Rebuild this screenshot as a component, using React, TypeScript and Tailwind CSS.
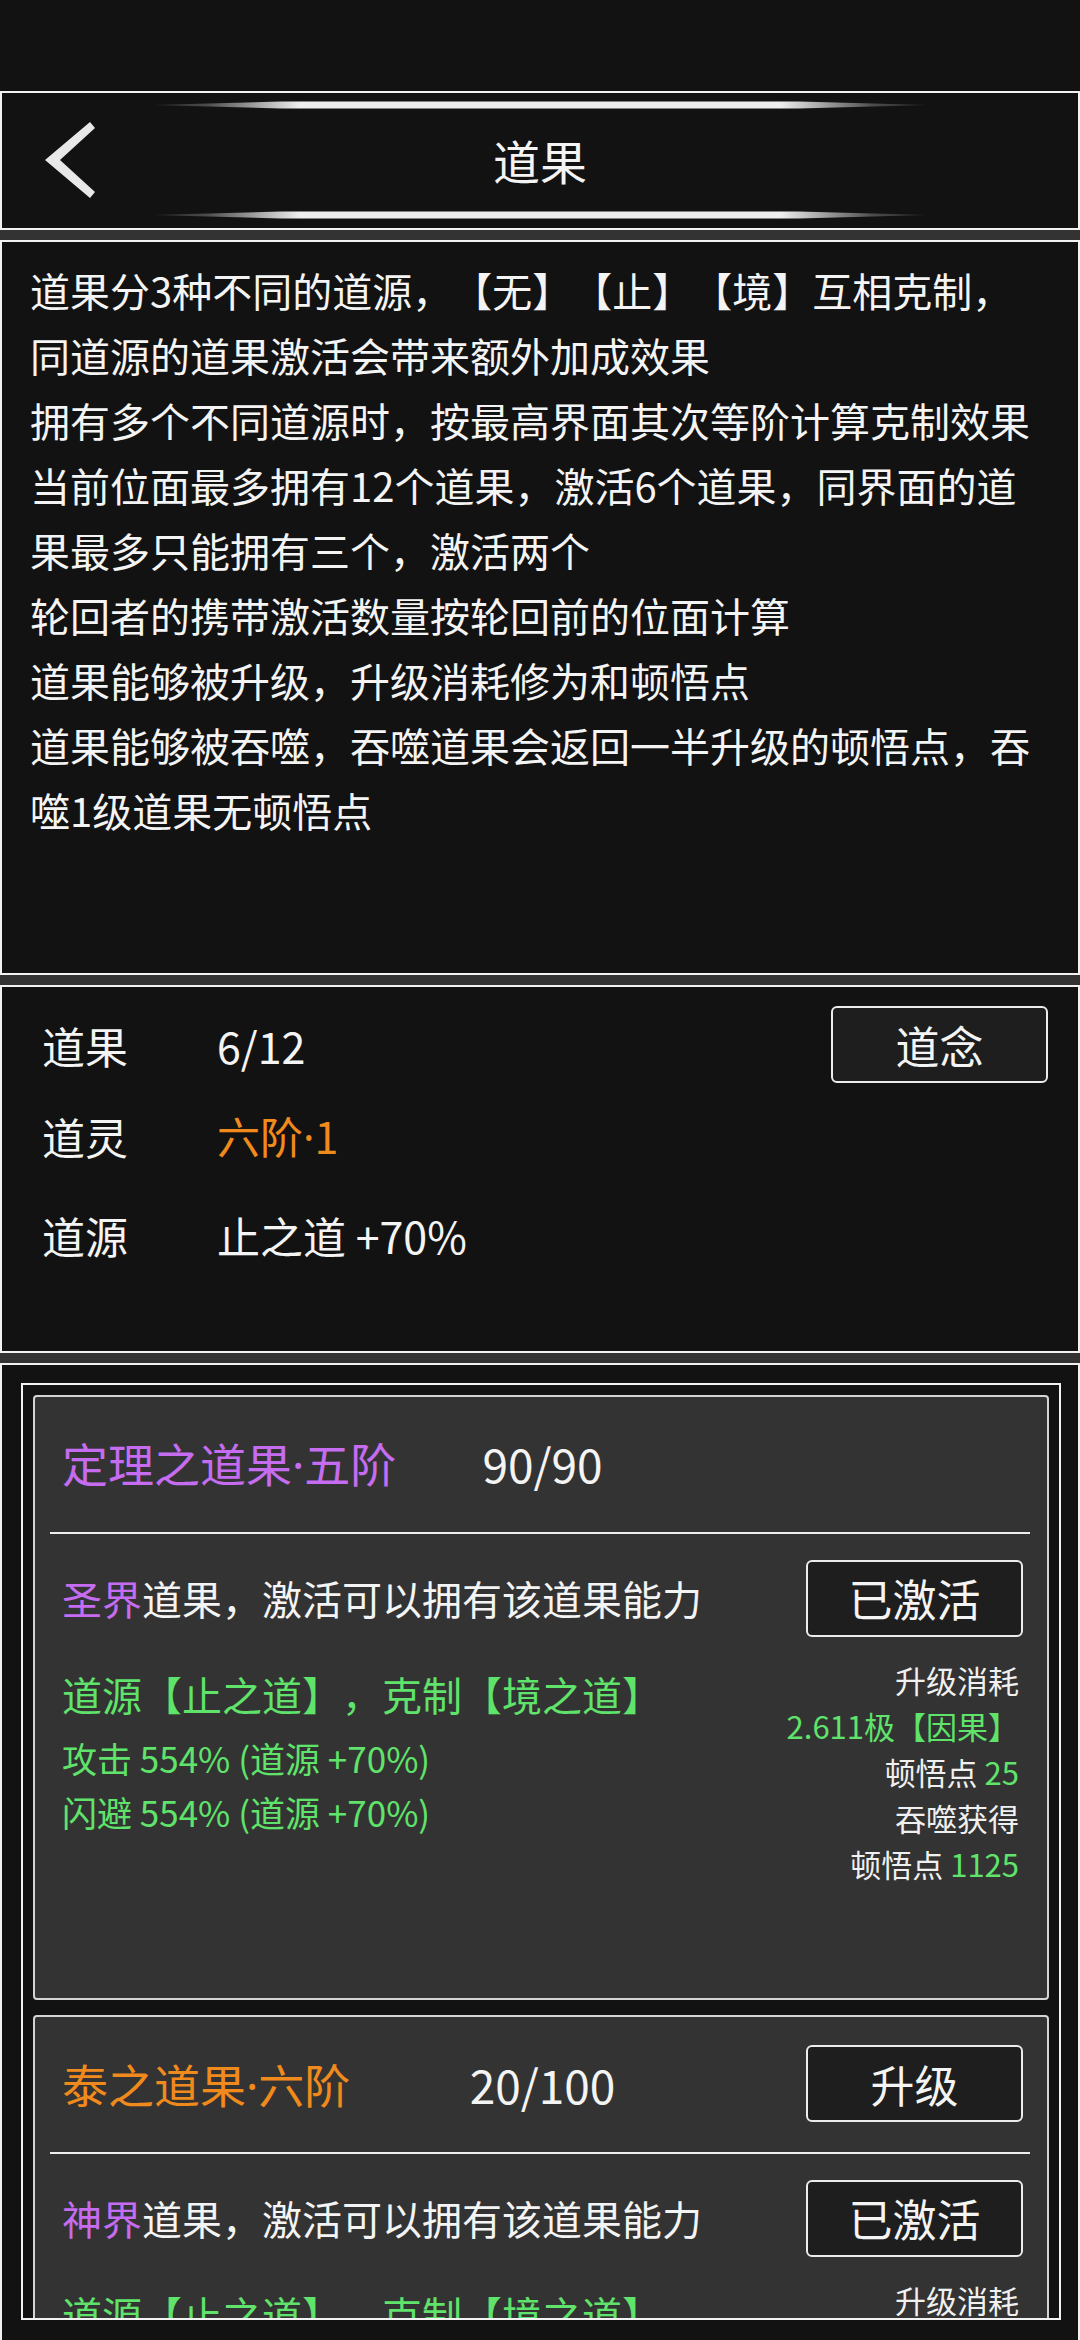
import React from "react";

const GREEN = "text-[#5fe36b]";
const PURPLE = "text-[#c56cf0]";
const ORANGE = "text-[#f08a1d]";

function Dot() {
  return <span className="font-['Noto_Sans',sans-serif]">·</span>;
}

function Chevron() {
  return (
    <svg width="50" height="76" viewBox="0 0 50 76" className="block">
      <polygon points="45,0 50,6 15,38 50,70 45,76 0,38" fill="#e8e8e8" />
    </svg>
  );
}

function GlowLine({ id }: { id: string }) {
  return (
    <svg width="778" height="8" viewBox="0 0 778 8" className="mx-auto block">
      <defs>
        <linearGradient id={id} x1="0" y1="0" x2="1" y2="0">
          <stop offset="0" stopColor="#262626" />
          <stop offset="0.07" stopColor="#4a4a4a" />
          <stop offset="0.13" stopColor="#9a9a9a" />
          <stop offset="0.19" stopColor="#ededed" />
          <stop offset="0.81" stopColor="#ededed" />
          <stop offset="0.87" stopColor="#9a9a9a" />
          <stop offset="0.93" stopColor="#4a4a4a" />
          <stop offset="1" stopColor="#262626" />
        </linearGradient>
      </defs>
      <polygon points="0,4 130,0.5 648,0.5 778,4 648,7.5 130,7.5" fill={`url(#${id})`} />
    </svg>
  );
}

function Btn({ children }: { children: React.ReactNode }) {
  return (
    <div className="w-[217px] h-[77px] shrink-0 flex items-center justify-center rounded-[6px] border-2 border-[#ececec] bg-[#1e1e1e] text-[44px] leading-[60px] text-[#f4f4f4]">
      {children}
    </div>
  );
}

const rules = [
  "道果分3种不同的道源，【无】【止】【境】互相克制，",
  "同道源的道果激活会带来额外加成效果",
  "拥有多个不同道源时，按最高界面其次等阶计算克制效果",
  "当前位面最多拥有12个道果，激活6个道果，同界面的道",
  "果最多只能拥有三个，激活两个",
  "轮回者的携带激活数量按轮回前的位面计算",
  "道果能够被升级，升级消耗修为和顿悟点",
  "道果能够被吞噬，吞噬道果会返回一半升级的顿悟点，吞",
  "噬1级道果无顿悟点",
];

type CardProps = {
  name: string;
  rank: string;
  titleColor: string;
  count: string;
  upgrade?: boolean;
  realm: string;
};

function Card({ name, rank, titleColor, count, upgrade, realm }: CardProps) {
  return (
    <div className="h-[605px] shrink-0 rounded-[4px] border-2 border-[#d4d4d4] bg-[#333333] pt-[28px]">
      <div className="grid h-[76px] grid-cols-[1fr_auto_1fr] items-center pl-[27px] pr-[24px]">
        <div className={`text-[46px] leading-[60px] whitespace-nowrap ${titleColor}`}>
          {name}
          <Dot />
          {rank}
        </div>
        <div className="text-[46px] leading-[60px] text-[#f4f4f4]">{count}</div>
        <div className="flex justify-end">{upgrade ? <Btn>升级</Btn> : null}</div>
      </div>
      <div className="mt-[31px] ml-[15px] mr-[17px] h-[2px] bg-[#eeeeee]" />
      <div className="mt-[26px] flex h-[76px] items-center justify-between pl-[27px] pr-[24px]">
        <div className="text-[40px] leading-[56px] text-[#f4f4f4] whitespace-nowrap">
          <span className={PURPLE}>{realm}</span>道果，激活可以拥有该道果能力
        </div>
        <Btn>已激活</Btn>
      </div>
      <div className="mt-[21px] flex justify-between pl-[27px] pr-[28px]">
        <div className={GREEN}>
          <div className="text-[40px] leading-[74px] whitespace-nowrap">道源【止之道】，克制【境之道】</div>
          <div className="text-[35px] leading-[54px] whitespace-nowrap">攻击 554% (道源 +70%)</div>
          <div className="text-[35px] leading-[54px] whitespace-nowrap">闪避 554% (道源 +70%)</div>
        </div>
        <div className="text-right text-[31px] leading-[46px] text-[#f0f0f0] whitespace-nowrap">
          <div>升级消耗</div>
          <div className={GREEN}>2.611极【因果】</div>
          <div>
            顿悟点 <span className={GREEN}>25</span>
          </div>
          <div>吞噬获得</div>
          <div>
            顿悟点 <span className={GREEN}>1125</span>
          </div>
        </div>
      </div>
    </div>
  );
}

export default function App() {
  return (
    <div className="w-[1080px] h-[2340px] overflow-hidden bg-[#121212] text-[#f4f4f4] font-['Noto_Sans_CJK_SC','Noto_Sans',sans-serif] [text-spacing-trim:space-all]">
      <div className="h-[91px]" />

      <header className="flex h-[139px] flex-col border-2 border-[#f2f2f2] pt-[8px] pb-[9px]">
        <GlowLine id="g1" />
        <div className="grid flex-1 grid-cols-[1fr_auto_1fr] items-center">
          <div className="pl-[43px]">
            <Chevron />
          </div>
          <div className="text-[47px] leading-[60px] text-[#f4f4f4]">道果</div>
          <div />
        </div>
        <GlowLine id="g2" />
      </header>

      <div className="h-[10px] bg-[#333333]" />

      <section className="h-[735px] border-2 border-[#f2f2f2] pl-[28px] pt-[16px]">
        {rules.map((r, i) => (
          <div key={i} className="text-[40px] leading-[65px] whitespace-nowrap text-[#f4f4f4]">
            {r}
          </div>
        ))}
      </section>

      <div className="h-[10px] bg-[#333333]" />

      <section className="h-[368px] border-2 border-[#f2f2f2] pt-[19px] pl-[40px] pr-[30px] text-[43px] leading-[58px]">
        <div className="flex h-[77px] items-center">
          <div className="w-[175px]">道果</div>
          <div>6/12</div>
          <div className="ml-auto">
            <Btn>道念</Btn>
          </div>
        </div>
        <div className="mt-[23px] flex h-[60px] items-center">
          <div className="w-[175px]">道灵</div>
          <div className={ORANGE}>
            六阶
            <Dot />1
          </div>
        </div>
        <div className="mt-[39px] flex h-[60px] items-center">
          <div className="w-[175px]">道源</div>
          <div>止之道 +70%</div>
        </div>
      </section>

      <div className="h-[10px] bg-[#333333]" />

      <section className="h-[990px] border-2 border-[#f2f2f2] pt-[18px] pl-[19px] pr-[17px]">
        <div className="flex h-[937px] flex-col gap-[15px] overflow-hidden border-2 border-[#f2f2f2] px-[10px] pt-[10px]">
          <Card name="定理之道果" rank="五阶" titleColor={PURPLE} count="90/90" realm="圣界" />
          <Card name="泰之道果" rank="六阶" titleColor={ORANGE} count="20/100" upgrade realm="神界" />
        </div>
      </section>
    </div>
  );
}
